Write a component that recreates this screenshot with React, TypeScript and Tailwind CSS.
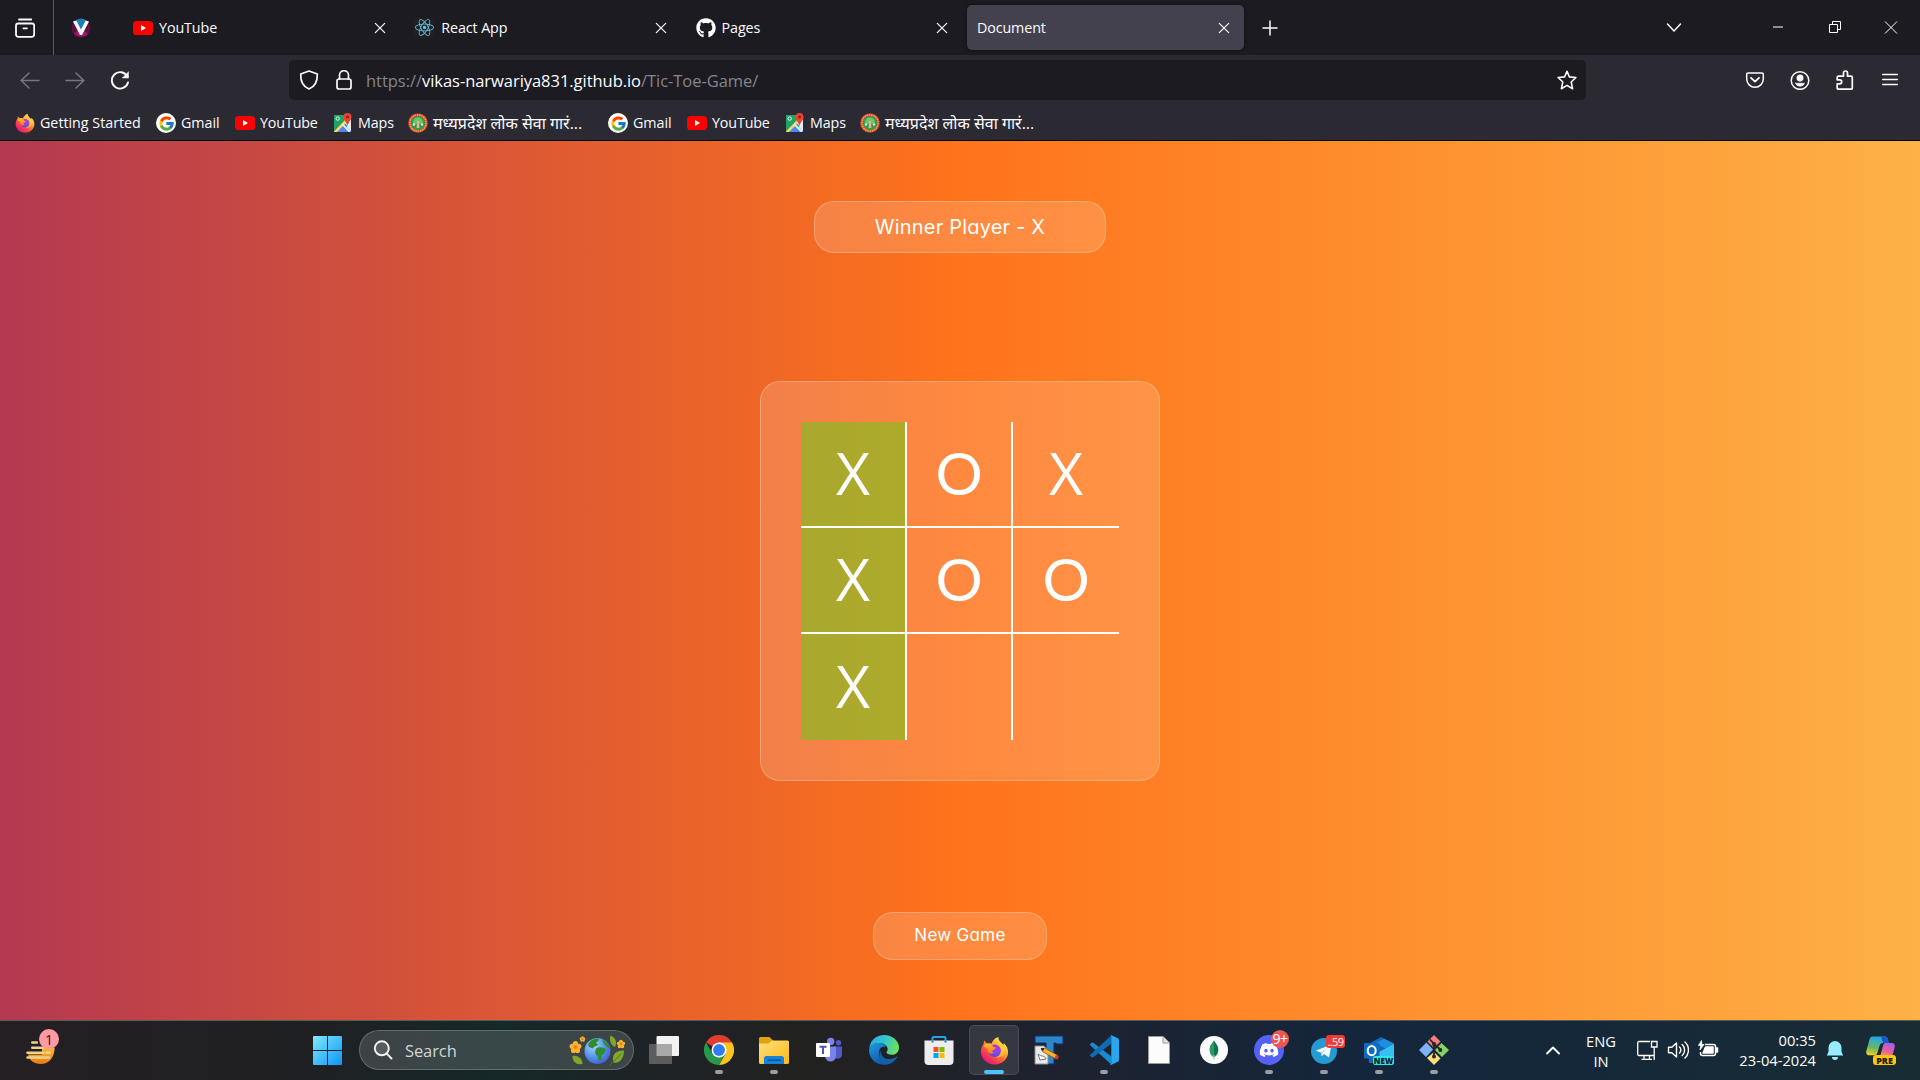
import type { ReactNode } from "react";
import { FaGithub, FaDiscord, FaReact } from "react-icons/fa";
import { FcGoogle } from "react-icons/fc";

/* ---------- coloured icons ---------- */

function YouTubeIcon() {
  return (
    <svg viewBox="0 0 20 20" className="size-5 shrink-0">
      <rect x="0" y="3" width="20" height="14" rx="3.6" fill="#f00" />
      <path d="M8 7.1 13 10 8 12.9Z" fill="#fff" />
    </svg>
  );
}

function FirefoxIcon({ className }: { className: string }) {
  return (
    <svg viewBox="0 0 32 32" className={className}>
      <defs>
        <linearGradient id="fxBody" x1="0.85" y1="0.1" x2="0.2" y2="0.95">
          <stop offset="0" stopColor="#fff44f" />
          <stop offset="0.3" stopColor="#ffb52e" />
          <stop offset="0.55" stopColor="#ff6a33" />
          <stop offset="0.8" stopColor="#f9305a" />
          <stop offset="1" stopColor="#e3158c" />
        </linearGradient>
        <radialGradient id="fxGlobe" cx="0.6" cy="0.25" r="0.8">
          <stop offset="0" stopColor="#b833e1" />
          <stop offset="0.5" stopColor="#8b46f0" />
          <stop offset="1" stopColor="#4a4fd0" />
        </radialGradient>
        <linearGradient id="fxFlame" x1="0.2" y1="0" x2="0.6" y2="1">
          <stop offset="0" stopColor="#ffbd2e" />
          <stop offset="1" stopColor="#ff7a2a" />
        </linearGradient>
      </defs>
      <path
        d="M20.2 1c-.5 3.500 2 5 4 7.200.5.500.9 1.100 1.300 1.700l1-1.900c2.800 2.600 4.500 6 4.500 10C31 25.500 24.300 31.500 16 31.500S1 25 1 17.500c0-3 1-6 2.800-8.300L4.500 5l3.300 3.400c1.600-.5 3.500-.4 4.900.2C13.500 5.500 16.500 2 20.200 1Z"
        fill="url(#fxBody)"
      />
      <circle cx="16.300" cy="16.300" r="6.800" fill="url(#fxGlobe)" />
      <path
        d="M4 10.500C5.500 8.500 9.500 7.500 12.500 9l2 2.700c.6.700 1.700.8 3 .9-.1 1.700-2.200 2.600-3.700 3.200-.5 1.200.2 2.200 1.400 2.800-2 1.700-5.700.7-6.400-1.600-.4-1.200-.2-2 .3-2.700C7 13.500 5 12.500 4 10.500Z"
        fill="url(#fxFlame)"
      />
      <path d="M20.200 1c-2.700 5.200 3.500 7.500 3.300 13.500-.1 5.300-3.500 8.600-7 9.200 5.800 1.300 11.500-2.600 11.500-8.800C28 8.900 20.500 7 20.200 1Z" fill="#ffd23c" opacity="0.55" />
    </svg>
  );
}

function GoogleIcon() {
  return (
    <span className="flex size-5 shrink-0 items-center justify-center rounded-full bg-white">
      <FcGoogle className="size-[17px]" />
    </span>
  );
}

function MapsIcon() {
  return (
    <svg viewBox="0 0 20 20" className="size-5 shrink-0">
      <path d="M1 2h17v17H1Z" fill="#1fa463" />
      <path d="M18 4v15H12Z M9.500 11 17.500 3V16L11 9.500Z" fill="#e8eaed" />
      <path d="M1 19 10 10l8.500 9Z" fill="#4a89f3" />
      <path d="M1 18.500 12 7l2 2L4 19H1Z" fill="#fdd663" />
      <path d="M9.700 10.300 17 17.500V19h-1.500L8.500 11.600Z" fill="#e8eaed" />
      <path d="M14.500 0A4 4 0 0 0 10.500 4c0 3.300 3 4.500 4 9 1-4.500 4-5.700 4-9a4 4 0 0 0-4-4Z" fill="#ea4335" />
      <circle cx="14.500" cy="4" r="1.500" fill="#8c1f18" />
      <circle cx="4.700" cy="5.600" r="1.700" fill="none" stroke="#e8f5ee" strokeWidth="1" />
    </svg>
  );
}

function EmblemIcon() {
  return (
    <svg viewBox="0 0 20 20" className="size-5 shrink-0">
      <circle cx="10" cy="10" r="9.800" fill="#d8453c" />
      <circle cx="10" cy="10" r="8.100" fill="none" stroke="#f1b23c" strokeWidth="1.400" strokeDasharray="1.500 .8" />
      <circle cx="10" cy="10" r="7" fill="#2f9d51" />
      <path d="M5 10c0-3.500 2.300-5.500 5-5.500s5 2 5 5.500l-2.500 1-2.500-1-2.500 1Z" fill="#6fc56b" />
      <path d="M9.100 8h1.800l.5 7H8.600Z" fill="#ddb893" />
      <circle cx="6" cy="11.500" r="1.200" fill="#eee3c8" />
      <circle cx="14" cy="11.500" r="1.200" fill="#eee3c8" />
    </svg>
  );
}

function VIcon() {
  return (
    <svg viewBox="0 0 20 20" className="size-5 shrink-0">
      <circle cx="10" cy="10" r="9.500" fill="#5b0f47" />
      <path d="M3 15.500A9.500 9.500 0 0 0 17 16l-7-6Z" fill="#a8126c" />
      <path d="M4.500 2.500A9.500 9.500 0 0 1 15.500 2.500L10 12Z" fill="#1b7fb8" />
      <path d="M2 3.500 5.300 2.500 10 11.500l4.700-9L18 3.500 11 17H9Z" fill="#fff" />
    </svg>
  );
}

/* ---------- browser line icons ---------- */

type LineProps = { children: ReactNode; className?: string; width?: number };

function Line({ children, className = "size-5 text-[#fbfbfe]", width = 1.5 }: LineProps) {
  return (
    <svg
      viewBox="0 0 20 20"
      className={`shrink-0 ${className}`}
      fill="none"
      stroke="currentColor"
      strokeWidth={width}
      strokeLinecap="round"
      strokeLinejoin="round"
    >
      {children}
    </svg>
  );
}

function CloseGlyph() {
  return (
    <Line className="size-5 text-[#fbfbfe]" width={1.2}>
      <path d="M5.300 5.300 14.700 14.700M14.700 5.300 5.300 14.700" />
    </Line>
  );
}

/* ---------- browser chrome ---------- */

function Tab({ icon, title, active = false }: { icon?: ReactNode; title: string; active?: boolean }) {
  return (
    <div className="h-[45px] w-[281.300px] px-[2px]">
      <div
        className={
          active
            ? "flex h-full items-center gap-[6px] rounded-[5px] bg-[#42414d] pr-[10.500px] pl-[10px] shadow-[0_0_4px_rgba(0,0,0,0.5)]"
            : "flex h-full items-center gap-[6px] pr-[10.500px] pl-[10px]"
        }
      >
        {icon}
        <span className="flex-1 pt-px text-[14.300px] leading-5 tracking-[-0.100px] text-[#fbfbfe]">{title}</span>
        <CloseGlyph />
      </div>
    </div>
  );
}

function TabBar() {
  return (
    <div className="flex h-[55px] items-center bg-[#1c1b22]">
      <div className="flex h-full w-[54px] items-center border-r border-[#5b5b66] pl-[15px]">
        <Line width={1.800}>
          <rect x="1" y="5.500" width="18.200" height="13.300" rx="2.200" />
          <path d="M4 1.500h12.200M8.300 10.300h3.600" />
        </Line>
      </div>
      <div className="w-[67px] pl-[17px]">
        <VIcon />
      </div>
      <Tab icon={<YouTubeIcon />} title="YouTube" />
      <Tab
        icon={
          <span className="mr-px flex size-5 shrink-0 items-center justify-center bg-[#202024]">
            <FaReact className="size-[19px] text-[#61c4de]" />
          </span>
        }
        title="React App"
      />
      <Tab icon={<FaGithub className="size-5 shrink-0 text-white" />} title="Pages" />
      <Tab title="Document" active />
      <div className="pl-[14px]">
        <Line className="size-5 text-[#fbfbfe]" width={1.500}>
          <path d="M10 3v14M3 10h14" />
        </Line>
      </div>
      <div className="ml-auto flex items-center pr-[19px]">
        <Line>
          <path d="M3.500 6 10 13 16.500 6" />
        </Line>
        <svg viewBox="0 0 20 20" className="ml-[84px] size-5 text-white" fill="none" stroke="currentColor">
          <path d="M5 9h10" />
        </svg>
        <svg viewBox="0 0 20 20" className="ml-[37px] size-5 text-white" fill="none" stroke="currentColor">
          <path d="M4.500 6.500h8v8h-8ZM7.500 6.500v-3h8v8h-3" />
        </svg>
        <svg viewBox="0 0 20 20" className="ml-[36px] size-5 text-white" fill="none" stroke="currentColor">
          <path d="M4 3.500 16 15.500M16 3.500 4 15.500" />
        </svg>
      </div>
    </div>
  );
}

function NavBar() {
  return (
    <div className="flex h-[50px] items-center pl-5">
      <Line className="size-5 text-[#77767e]">
        <path d="M1 10.500h18M9 3 1.200 10.500 9 18" />
      </Line>
      <Line className="ml-[25px] size-5 text-[#77767e]">
        <path d="M1 10.500h18M11 3 18.800 10.500 11 18" />
      </Line>
      <Line className="ml-[25px] size-5 text-[#fbfbfe]" width={1.900}>
        <path d="M17.300 6.500A8.200 8.200 0 1 0 18 12.500" />
        <path d="M18.500 2v6h-6Z" fill="currentColor" strokeWidth="0.500" />
      </Line>
      <div className="ml-[159px] flex h-10 w-[1297px] items-center rounded-[5px] bg-[#1c1b22] pr-[9px] pl-[10px]">
        <Line width={1.700}>
          <path d="M10 1 18.300 4c.2 6.500-2 12.500-8.300 15C3.700 16.500 1.500 10.500 1.700 4Z" />
        </Line>
        <Line className="ml-[15px] size-5 text-[#fbfbfe]" width={1.700}>
          <rect x="3" y="9" width="14" height="10" rx="2" />
          <path d="M5.500 9V5.200a4.500 4.500 0 0 1 9 0V9" />
        </Line>
        <span className="ml-[12px] flex-1 pt-[3px] text-[16.500px] tracking-[-0.040px] text-[#85848c]">
          https://<span className="text-[#fbfbfe]">vikas-narwariya831.github.io</span>/Tic-Toe-Game/
        </span>
        <Line width={1.600}>
          <path d="M10 1.300 12.400 6.900 18.900 7.500 14.200 12 15.600 18.700 10 15.400 4.400 18.700 5.800 12 1.100 7.500 7.600 6.900Z" />
        </Line>
      </div>
      <div className="ml-auto flex items-center gap-[25px] pr-[20px]">
        <Line>
          <path d="M3 3h14a1.300 1.300 0 0 1 1.300 1.300V9a8.300 8.300 0 0 1-16.600 0V4.300A1.300 1.300 0 0 1 3 3Z" />
          <path d="M6 7.800 10 11.600l4-3.800" strokeWidth="1.800" />
        </Line>
        <Line>
          <circle cx="10" cy="10.500" r="8.800" />
          <circle cx="10" cy="8" r="2.700" fill="currentColor" />
          <path d="M5.500 13.200h9c-.6 2-2.400 3-4.500 3s-3.900-1-4.500-3Z" fill="currentColor" strokeWidth="0.500" />
        </Line>
        <Line width={1.700}>
          <path d="M3 19.200h13a1.300 1.300 0 0 0 1.300-1.300V7.500A1.300 1.300 0 0 0 16 6.200h-3.500V3a2 2 0 0 0-4 0v3.200H3.500A1.300 1.300 0 0 0 2.200 7.500v2.300h2.500a2 2 0 0 1 0 4H2.200v4.100a1.200 1.200 0 0 0 .8 1.300Z" />
        </Line>
        <Line>
          <path d="M2.700 4.500h14.600M2.700 9.500h14.600M2.700 14.500h14.600" />
        </Line>
      </div>
    </div>
  );
}

function Bookmark({ icon, label, className }: { icon: ReactNode; label: string; className: string }) {
  return (
    <div className="flex items-center gap-[5px]">
      {icon}
      <span className={`leading-5 whitespace-nowrap text-[#fbfbfe] ${className}`}>{label}</span>
    </div>
  );
}

function BookmarkGroup() {
  return (
    <div className="flex gap-4">
      <Bookmark icon={<GoogleIcon />} label="Gmail" className="w-[38px] text-[14.300px] tracking-[-0.050px]" />
      <Bookmark icon={<YouTubeIcon />} label="YouTube" className="w-[57px] text-[14.300px] tracking-[-0.150px]" />
      <Bookmark icon={<MapsIcon />} label="Maps" className="w-[34px] text-[14.300px] tracking-[-0.100px]" />
      <Bookmark icon={<EmblemIcon />} label="मध्यप्रदेश लोक सेवा गारं..." className="w-[149px] text-[16px]" />
    </div>
  );
}

function BookmarksBar() {
  return (
    <div className="flex h-[35px] items-center pt-px pl-[15px]">
      <Bookmark
        icon={<FirefoxIcon className="size-5 shrink-0" />}
        label="Getting Started"
        className="mr-4 w-[100px] text-[14.300px] tracking-[-0.020px]"
      />
      <BookmarkGroup />
      <div className="w-[26px]" />
      <BookmarkGroup />
    </div>
  );
}

/* ---------- game ---------- */

const cells = ["X", "O", "X", "X", "O", "O", "X", "", ""];

function cellClass(index: number) {
  const base = "flex items-center justify-center pb-1 text-[59px] leading-none text-white border-white";
  const face = cells[index] === "O" ? "font-['Lato',sans-serif]" : "font-['Open_Sans',sans-serif]";
  const right = index % 3 < 2 ? "border-r-2" : "";
  const bottom = index < 6 ? "border-b-2" : "";
  const won = index % 3 === 0 ? "bg-[rgba(57,225,10,0.4)]" : "";
  return `${base} ${face} ${right} ${bottom} ${won}`;
}

function Game() {
  return (
    <main className="flex h-[879px] flex-col items-center bg-[linear-gradient(to_right,#b33951,#ff731b_50%,#fdb146)] pt-[60px] font-['Inter',sans-serif] text-white [font-feature-settings:'cv11']">
      <div className="flex h-[52px] w-[292px] items-center justify-center rounded-[20px] border border-white/25 bg-white/[0.16] text-[20px] tracking-[0.200px]">
        Winner Player - X
      </div>
      <div className="mt-32 flex size-[400px] items-center justify-center rounded-[20px] border border-white/25 bg-white/[0.16]">
        <div className="grid size-[318px] grid-cols-3 grid-rows-3">
          {cells.map((mark, i) => (
            <div key={i} className={cellClass(i)}>
              {mark}
            </div>
          ))}
        </div>
      </div>
      <button className="mt-[131px] h-12 w-[174px] rounded-[20px] border border-white/25 bg-white/[0.16] text-[17px] tracking-[0.300px]">
        New Game
      </button>
    </main>
  );
}

/* ---------- taskbar ---------- */

function WeatherIcon() {
  return (
    <div className="relative h-10 w-[34px]">
      <svg viewBox="0 0 34 40" className="h-10 w-[34px]">
        <defs>
          <linearGradient id="sun" x1="0" y1="0" x2="0" y2="1">
            <stop offset="0" stopColor="#f9b934" />
            <stop offset="1" stopColor="#e8791a" />
          </linearGradient>
        </defs>
        <path d="M3 24.500C4.500 30.500 9 34 15.500 34 24 34 29.500 28 29.700 17.500H17V24.500Z" fill="url(#sun)" />
        <path d="M7.300 12.500h4.500M7.300 17.700h11M2.500 22.700h16M2.500 27.500h21.500M21.500 22.700h3.500" stroke="#e9d38d" strokeWidth="2.600" strokeLinecap="round" />
      </svg>
      <span className="absolute top-[-1px] left-[14px] flex size-5 items-center justify-center rounded-full bg-[#ff99a4] text-[14px] text-[#1c1c1c]">
        1
      </span>
    </div>
  );
}

function StartIcon() {
  return (
    <svg viewBox="0 0 29 29" className="size-[29px]">
      <defs>
        <linearGradient id="win" x1="0" y1="0" x2="1" y2="1">
          <stop offset="0" stopColor="#7eebff" />
          <stop offset="1" stopColor="#0d93f5" />
        </linearGradient>
      </defs>
      <path d="M1 0h13v14H0V1a1 1 0 0 1 1-1ZM15 0h13a1 1 0 0 1 1 1v13H15ZM0 15h14v14H1a1 1 0 0 1-1-1ZM15 15h14v13a1 1 0 0 1-1 1H15Z" fill="url(#win)" />
    </svg>
  );
}

function EarthArt() {
  const flower = (cx: number, cy: number, r: number) => (
    <g fill="#f8b62d">
      <circle cx={cx} cy={cy - r} r={r * 0.75} />
      <circle cx={cx + r} cy={cy - r * 0.2} r={r * 0.75} />
      <circle cx={cx + r * 0.6} cy={cy + r} r={r * 0.75} />
      <circle cx={cx - r * 0.6} cy={cy + r} r={r * 0.75} />
      <circle cx={cx - r} cy={cy - r * 0.2} r={r * 0.75} />
      <circle cx={cx} cy={cy} r={r * 0.6} fill="#f07d1a" />
    </g>
  );
  return (
    <svg viewBox="0 0 56 32" className="h-8 w-14">
      <defs>
        <radialGradient id="earth" cx="0.35" cy="0.3" r="0.8">
          <stop offset="0" stopColor="#a9d4ff" />
          <stop offset="0.6" stopColor="#4c8ee8" />
          <stop offset="1" stopColor="#4a55c8" />
        </radialGradient>
      </defs>
      <circle cx="28.500" cy="17" r="13" fill="url(#earth)" />
      <path d="M20 9c2-3.500 6-5 9.500-4.500 1 1.500-1 3-2.500 4l2 2.500c-2 1.500-4 1-5 3.500l-4-1.500c-1-1.500-1-3 0-4ZM27 14.500c3-2 8-1.500 10 1l-2 4-2 1.500-1 5c-2 2-3 0-3-3l-3-4ZM33 5.500c4 1.800 7 5 8 9l-3-1.500-3-3Z" fill="#2f8d2c" />
      {flower(6.500, 13, 3.400)}
      {flower(13.500, 5, 1.600)}
      {flower(52, 10, 2.400)}
      <path d="M3.500 22c6-1 10 3 10 8-6 1-10-2-10-8ZM41.500 1.500c5 2 7 7 4.500 11.500-4-2-6-6-4.500-11.500ZM55 16.500c-9-.5-12.500 5-10.500 12 6 1.500 10.500-4 10.500-12Z" fill="#7fa82a" />
      <path d="M44 27.500 40.500 31.500M44 28 52 20" stroke="#4f7a1e" fill="none" />
    </svg>
  );
}

function SearchBox() {
  return (
    <div className="ml-[17px] flex h-10 w-[275px] items-center rounded-full border border-white/20 bg-white/[0.15] pr-[8px] pl-[13px]">
      <svg viewBox="0 0 20 20" className="size-5" fill="none" stroke="#f0f0f0" strokeWidth="2" strokeLinecap="round">
        <circle cx="8.800" cy="8.300" r="7" fill="#ffffff22" />
        <path d="M13.800 13.600 18.500 18.500" />
      </svg>
      <span className="ml-3 flex-1 pt-px text-[16.500px] leading-5 tracking-[-0.100px] text-[#d2d5d6]">Search</span>
      <EarthArt />
    </div>
  );
}

function TaskViewIcon() {
  return (
    <svg viewBox="0 0 30 30" className="size-[30px]">
      <rect x="7.500" y="1" width="22.500" height="20" rx="1" fill="#f3f3f3" />
      <rect x="0" y="9" width="23" height="20" rx="1" fill="#5c5c5c" />
      <path d="M7.500 9H23v12H7.500Z" fill="#a9a9a9" />
    </svg>
  );
}

function ChromeIcon() {
  return (
    <svg viewBox="0 0 48 48" className="size-[30px]">
      <path d="M24 24 3.200 12A24 24 0 0 1 44.800 12Z" fill="#e33b2e" />
      <path d="M24 12h20.800A24 24 0 0 1 24 48L34.400 30Z" fill="#fcc31e" />
      <path d="M3.200 12A24 24 0 0 0 24 48L34.400 30 13.600 30Z" fill="#26994b" />
      <circle cx="24" cy="24" r="12" fill="#fff" />
      <circle cx="24" cy="24" r="9.500" fill="#2f7df0" />
    </svg>
  );
}

function FolderIcon() {
  return (
    <svg viewBox="0 0 30 30" className="size-[30px]">
      <defs>
        <linearGradient id="folder" x1="0" y1="0" x2="1" y2="1">
          <stop offset="0" stopColor="#ffdf7e" />
          <stop offset="1" stopColor="#fdbb17" />
        </linearGradient>
      </defs>
      <path d="M1.500 2h9l4 4v5H0V3.500A1.500 1.500 0 0 1 1.500 2Z" fill="#e0a30c" />
      <path d="M0 8.500h9.500L13 5.500h15.500A1.500 1.500 0 0 1 30 7v20.500a1.500 1.500 0 0 1-1.500 1.500h-27A1.500 1.500 0 0 1 0 27.500Z" fill="url(#folder)" />
      <path d="M5 29v-5.500a2.500 2.500 0 0 1 2.500-2.500h15a2.500 2.500 0 0 1 2.500 2.500V29Z" fill="#1683d8" />
      <path d="M9 25.300h12" stroke="#0a4f94" strokeWidth="1.500" strokeLinecap="round" />
    </svg>
  );
}

function TeamsIcon() {
  return (
    <svg viewBox="0 0 30 30" className="size-[30px]">
      <circle cx="16.700" cy="6.500" r="3.700" fill="#7b83eb" />
      <circle cx="24.500" cy="7.700" r="2.700" fill="#5059c9" />
      <path d="M20 11.500h8v8a4.500 4.500 0 0 1-8 2.500Z" fill="#5059c9" />
      <path d="M11 11.500h11V21a5.500 5.500 0 0 1-11 0Z" fill="#7b83eb" />
      <rect x="2" y="8" width="14" height="14" rx="1" fill="#fff" />
      <path d="M5.500 11.700h7M9 11.700v7.300" stroke="#4b53bc" strokeWidth="2" />
    </svg>
  );
}

function EdgeIcon() {
  return (
    <svg viewBox="0 0 30 30" className="size-[30px]">
      <defs>
        <linearGradient id="edgeTop" x1="0" y1="0.200" x2="1" y2="0.500">
          <stop offset="0" stopColor="#2aa8e4" />
          <stop offset="0.500" stopColor="#33c5cf" />
          <stop offset="1" stopColor="#6fe25a" />
        </linearGradient>
        <linearGradient id="edgeLeft" x1="0" y1="0" x2="0.500" y2="1">
          <stop offset="0" stopColor="#1c9de0" />
          <stop offset="1" stopColor="#0f59a8" />
        </linearGradient>
      </defs>
      <path d="M.3 13C1.500 5 7.500 0 15 0c8.500 0 15 6 15 12.500 0 4.500-3 7.300-7 7.300-3.500 0-5.500-1.300-5.500-2.600 0-.8 1.200-1.300 1.200-3.200C18.700 11 15 8 10.500 8 6 8 2.500 10 .3 13Z" fill="url(#edgeTop)" />
      <path d="M0 15C.5 10.500 5 8 9.500 8c4 0 7 1.700 8.300 4C13.500 10.500 9.800 13.700 9.800 18c0 5.500 3.700 9.700 8.700 11.500C9 31.500 0 25 0 15Z" fill="url(#edgeLeft)" />
      <path d="M12 15.500c-.8 5.500 4 9 9 8.500 3-.3 5-1.400 6.500-2.300.6-.3 1 .2.700.8-2 3.500-6 6.500-10.500 7C12 28.500 7.700 21.500 12 15.500Z" fill="#1460a8" />
    </svg>
  );
}

function StoreIcon() {
  return (
    <svg viewBox="0 0 30 30" className="size-[30px]">
      <path d="M8.500 7V3a1 1 0 0 1 1-1h11a1 1 0 0 1 1 1v4" fill="none" stroke="#1fa4e8" strokeWidth="2" />
      <path d="M.5 5.500h29V26a4 4 0 0 1-4 4h-21a4 4 0 0 1-4-4Z" fill="#ededed" />
      <path d="M9.500 12h5v5h-5Z" fill="#f25022" />
      <path d="M15.500 12h5v5h-5Z" fill="#7fba00" />
      <path d="M9.500 18h5v5h-5Z" fill="#00a4ef" />
      <path d="M15.500 18h5v5h-5Z" fill="#ffb900" />
      <path d="M8.500 5.500v2M21.500 5.500v2" stroke="#1679c4" strokeWidth="2" />
    </svg>
  );
}

function TextToolIcon() {
  return (
    <svg viewBox="0 0 30 30" className="size-[30px]">
      <path d="M1 1h28v8h-7V8h-2v21h-8V8H1Z" fill="#2f86c4" stroke="#0c2f80" strokeWidth="1" />
      <path d="M1 11h9l4 4v14H1Z" fill="#e9e9e9" stroke="#8d8d8d" />
      <path d="M4 19c3 3 7 1 8 5l-6 1Z" stroke="#777" fill="#fff" />
      <path d="M7 14 10.500 13 24 20.500l-2 3.500L9 17Z" fill="#f7b42a" stroke="#7a4a10" strokeWidth="0.700" />
      <path d="m22 20 3 1.500-1.500 3.200-3-1.700Z" fill="#c43e2c" />
      <path d="m6.500 13.300 4-.3-1.500 3.200Z" fill="#222" />
    </svg>
  );
}

function VsCodeIcon() {
  return (
    <svg viewBox="0 0 30 30" className="size-[30px]">
      <path d="M.6 9.700 2.600 7.800a1.400 1.400 0 0 1 1.700-.1L22.500 21.500V29.700Z" fill="#1a8ad0" />
      <path d="M.6 20.300 2.600 22.200a1.400 1.400 0 0 0 1.700.1L22.500 8.500V.3Z" fill="#0f6cb3" />
      <path d="M22.500.3 28.800 3.200A2 2 0 0 1 30 5v20a2 2 0 0 1-1.200 1.800L22.500 29.700c-.8.3-1.500.1-2-.5.8.6 1.800.2 1.800-.9V1.700c0-1.100-1-1.500-1.800-.9.500-.6 1.200-.8 2-.5Z" fill="#27a6f2" />
    </svg>
  );
}

function FileIcon() {
  return (
    <svg viewBox="0 0 30 30" className="size-[30px]">
      <path d="M4.500 1.500h14.500l6.500 6.500v20.500h-21Z" fill="#fcfcfc" stroke="#9a9a9a" />
      <path d="M19 1.500V8h6.500" fill="#e3e3e3" stroke="#9a9a9a" />
    </svg>
  );
}

function MongoIcon() {
  return (
    <svg viewBox="0 0 28 28" className="size-7">
      <circle cx="14" cy="14" r="14" fill="#fbfbfb" />
      <path d="M14 4.500c1.500 3 4.300 4.500 4.300 9.500 0 3.500-1.800 5.500-3.700 7h-1.200c-1.900-1.500-3.700-3.500-3.700-7 0-5 2.800-6.500 4.300-9.500Z" fill="#0f7550" />
      <path d="M14 4.500c-1.500 3-4.300 4.500-4.300 9.500 0 3.500 1.800 5.500 3.700 7H14Z" fill="#2a9a68" />
      <path d="M14 19v4.500" stroke="#b9c4bf" strokeWidth="1.200" />
    </svg>
  );
}

function DiscordIcon() {
  return (
    <span className="relative flex size-[30px] items-center justify-center rounded-full bg-[#5662f6]">
      <FaDiscord className="size-5 text-white" />
      <span className="absolute -top-[5px] left-[17px] flex size-[18px] items-center justify-center rounded-full bg-[#ed5555] text-[14px] leading-none tracking-[-0.500px] text-white">
        9+
      </span>
    </span>
  );
}

function TelegramIcon() {
  return (
    <span className="relative flex size-[30px] items-center">
      <svg viewBox="0 0 26 26" className="mt-[2px] ml-[2px] size-[26px]">
        <circle cx="13" cy="13" r="13" fill="#249bd4" />
        <path d="M4.500 12.800 20.500 6.500 18 19.500l-5-3.500-2.300 2.300-.7-3.800Z" fill="#fff" />
        <path d="m10 14.500 7-5.500-5.300 6.200-1 3.100Z" fill="#b9d6e8" />
      </svg>
      <span className="absolute top-0 left-[17px] flex h-[13px] w-[19px] items-center justify-center rounded-[3px] bg-[#ee3b35] text-[11px] leading-none tracking-[-0.600px] text-white">
        ..59
      </span>
    </span>
  );
}

function OutlookIcon() {
  return (
    <span className="relative size-[30px]">
      <svg viewBox="0 0 30 30" className="size-[30px]">
        <path d="M5 8.500 17 2l13 6.500V28H5Z" fill="#1068bd" />
        <path d="M12 8 20 3.800l10 5L22 14Z" fill="#1d8fe0" />
        <path d="M15 17 30 9v19H10Z" fill="#38c0f2" />
        <rect x="0" y="8" width="15.500" height="15.500" rx="1" fill="#0f6cbd" />
        <ellipse cx="7.700" cy="15.600" rx="4" ry="4.600" fill="none" stroke="#fff" strokeWidth="2" />
      </svg>
      <span className="absolute top-[21px] left-[9px] flex h-[9px] w-[21px] items-center justify-center rounded-[2px] bg-[#2be4ea] text-[8px] leading-none font-extrabold text-[#0a1a24]">
        NEW
      </span>
    </span>
  );
}

function GitIcon() {
  return (
    <svg viewBox="0 0 30 30" className="size-[30px]">
      <path d="M15 0 21.500 6.500 15 13 8.500 6.500Z" fill="#f47c7c" />
      <path d="M7.500 7.500 14 14.500 7 22 0 15Z" fill="#7fb2f9" />
      <path d="M22.500 8 30 15 23 22 16 15Z" fill="#87d164" />
      <path d="M15 17 21.500 23.500 15 30 8 23Z" fill="#fbe07a" />
      <path d="M11 4.500 15 9v12M15 9l7 6" stroke="#2a2422" strokeWidth="1.800" fill="none" />
      <circle cx="15" cy="9" r="2" fill="#2a2422" />
      <circle cx="21.300" cy="15" r="2" fill="#2a2422" />
      <circle cx="15" cy="21.500" r="2" fill="#2a2422" />
    </svg>
  );
}

type TaskbarEntry = { name: string; icon: ReactNode; running?: boolean; active?: boolean };

const entries: TaskbarEntry[] = [
  { name: "task-view", icon: <TaskViewIcon /> },
  { name: "chrome", icon: <ChromeIcon />, running: true },
  { name: "files", icon: <FolderIcon />, running: true },
  { name: "teams", icon: <TeamsIcon /> },
  { name: "edge", icon: <EdgeIcon /> },
  { name: "store", icon: <StoreIcon /> },
  { name: "firefox", icon: <FirefoxIcon className="size-[29px]" />, active: true },
  { name: "text-tool", icon: <TextToolIcon /> },
  { name: "vscode", icon: <VsCodeIcon />, running: true },
  { name: "file", icon: <FileIcon /> },
  { name: "mongodb", icon: <MongoIcon /> },
  { name: "discord", icon: <DiscordIcon />, running: true },
  { name: "telegram", icon: <TelegramIcon />, running: true },
  { name: "outlook", icon: <OutlookIcon />, running: true },
  { name: "git", icon: <GitIcon />, running: true },
];

function TaskbarButton({ icon, running, active }: TaskbarEntry) {
  return (
    <div
      className={
        active
          ? "flex size-[50px] flex-col items-center rounded-[5px] border border-white/10 bg-white/10 pt-[9px]"
          : "flex size-[50px] flex-col items-center border border-transparent pt-[9px]"
      }
    >
      <div className="flex h-[30px] items-center justify-center">{icon}</div>
      {active && <div className="mt-[5px] h-1 w-5 rounded-full bg-[#4cc2ff]" />}
      {running && <div className="mt-[5px] h-1 w-2 rounded-full bg-[#9a9ea3]" />}
    </div>
  );
}

function Tray() {
  return (
    <div className="ml-auto flex items-center pr-[24px] text-[14.700px] leading-5 text-white">
      <Line className="size-5 text-white" width={1.900}>
        <path d="M4 13.500 10 7.500 16 13.500" />
      </Line>
      <div className="ml-[18px] w-[40px] pt-px text-center">
        ENG
        <br />
        IN
      </div>
      <div className="ml-[15px] flex items-center gap-[8.500px]">
        <svg viewBox="0 0 22 22" className="size-[22px]" fill="none" stroke="#fff" strokeWidth="1.300">
          <path d="M14 2.500H3a1.300 1.300 0 0 0-1.300 1.300v11.400a1.300 1.300 0 0 0 1.300 1.300h15M8 16.500V20M13.500 16.500V20M5.500 20.300h10.500" />
          <path d="M15.500 2.500h5.500v5.500h-5.500ZM18.200 8v13" />
        </svg>
        <svg viewBox="0 0 22 22" className="size-[22px]" fill="none" stroke="#fff" strokeWidth="1.400" strokeLinecap="round" strokeLinejoin="round">
          <path d="M1.500 8.300h3.300L9.500 4v14l-4.700-4.300H1.500Z" />
          <path d="M12.500 8a4 4 0 0 1 0 6M15.200 5.500a7.500 7.500 0 0 1 0 11M18 3a11 11 0 0 1 0 16" />
        </svg>
        <svg viewBox="0 0 22 22" className="size-[22px]" fill="none" stroke="#fff" strokeWidth="1.500" strokeLinejoin="round">
          <path d="M8 5.500h8.500A2 2 0 0 1 18.500 7.500v7a2 2 0 0 1-2 2h-11a2 2 0 0 1-2-2V13" />
          <path d="M8.500 8h7.500v6H6Z" fill="#fff" />
          <path d="M19.500 9v4h1V9Z" fill="#fff" />
          <path d="M4.500 1.500 1.500 6.500h2.300L3 11l4-5.500H4.800Z" fill="#fff" strokeWidth="0.800" />
        </svg>
      </div>
      <div className="ml-[17px] w-[80px] pb-px text-right whitespace-nowrap">
        00:35
        <br />
        23-04-2024
      </div>
      <svg viewBox="0 0 20 22" className="ml-[9px] h-[22px] w-5">
        <path d="M10 2a6.500 6.500 0 0 0-6.500 6.500v4.300L1.800 16.500h16.400l-1.700-3.700V8.500A6.500 6.500 0 0 0 10 2Z" fill="#99ebff" />
        <path d="M7 18h6a3 3 0 0 1-6 0Z" fill="#99ebff" />
      </svg>
      <div className="relative ml-[21px] h-[30px] w-[30px]">
        <svg viewBox="0 0 30 30" className="size-[30px]">
          <defs>
            <linearGradient id="copilotLeft" x1="0.500" y1="0" x2="0.300" y2="1">
              <stop offset="0" stopColor="#20a7ee" />
              <stop offset="0.600" stopColor="#63b768" />
              <stop offset="1" stopColor="#f0cf1c" />
            </linearGradient>
            <linearGradient id="copilotRight" x1="0.700" y1="0" x2="0.300" y2="1">
              <stop offset="0" stopColor="#a45cf0" />
              <stop offset="0.600" stopColor="#ee5f95" />
              <stop offset="1" stopColor="#fb9a5a" />
            </linearGradient>
          </defs>
          <path d="M7 1.500h11.500c2 0 3 1 3.500 3L22.500 8H17c-2 0-3 1-3.500 3l-2 6.500c-.7 2-1.500 2.800-3.500 2.800H3.500c-3 0-3.800-2.300-3-5L3.500 4.500c.5-2 1.500-3 3.500-3Z" fill="url(#copilotLeft)" />
          <path d="M15 1.500h3.500c2 0 3 1 3.500 3L22.500 8H17Z" fill="#1957d2" />
          <path d="M19 8h6.500c3 0 3.800 2 3 5l-2.500 9H14l3-11c.5-2 1-3 2-3Z" fill="url(#copilotRight)" />
        </svg>
        <span className="absolute top-[20px] left-[7px] flex h-[10px] w-[23px] items-center justify-center rounded-[3px] bg-[#fdc70c] text-[9px] leading-none font-extrabold text-[#1f1a00]">
          PRE
        </span>
      </div>
    </div>
  );
}

function Taskbar() {
  return (
    <footer className="flex h-[60px] items-center border-t border-[#5a5a5a] bg-[linear-gradient(to_right,#241f22_0px,#1f2023_300px,#162829_500px,#1e2326_650px,#222120_800px,#1d2230_1080px,#14263b_1350px,#15283a_1560px,#182c34_1920px)] pb-px">
      <div className="w-[313px] pl-[25px]">
        <WeatherIcon />
      </div>
      <StartIcon />
      <SearchBox />
      <div className="ml-[5px] flex gap-[5px]">
        {entries.map((entry) => (
          <TaskbarButton key={entry.name} {...entry} />
        ))}
      </div>
      <Tray />
    </footer>
  );
}

export default function App() {
  return (
    <div className="h-[1080px] w-[1920px] overflow-hidden bg-[#2b2a33] font-['Open_Sans','Noto_Sans',sans-serif]">
      <header className="h-[141px] border-b border-black">
        <TabBar />
        <NavBar />
        <BookmarksBar />
      </header>
      <Game />
      <Taskbar />
    </div>
  );
}
